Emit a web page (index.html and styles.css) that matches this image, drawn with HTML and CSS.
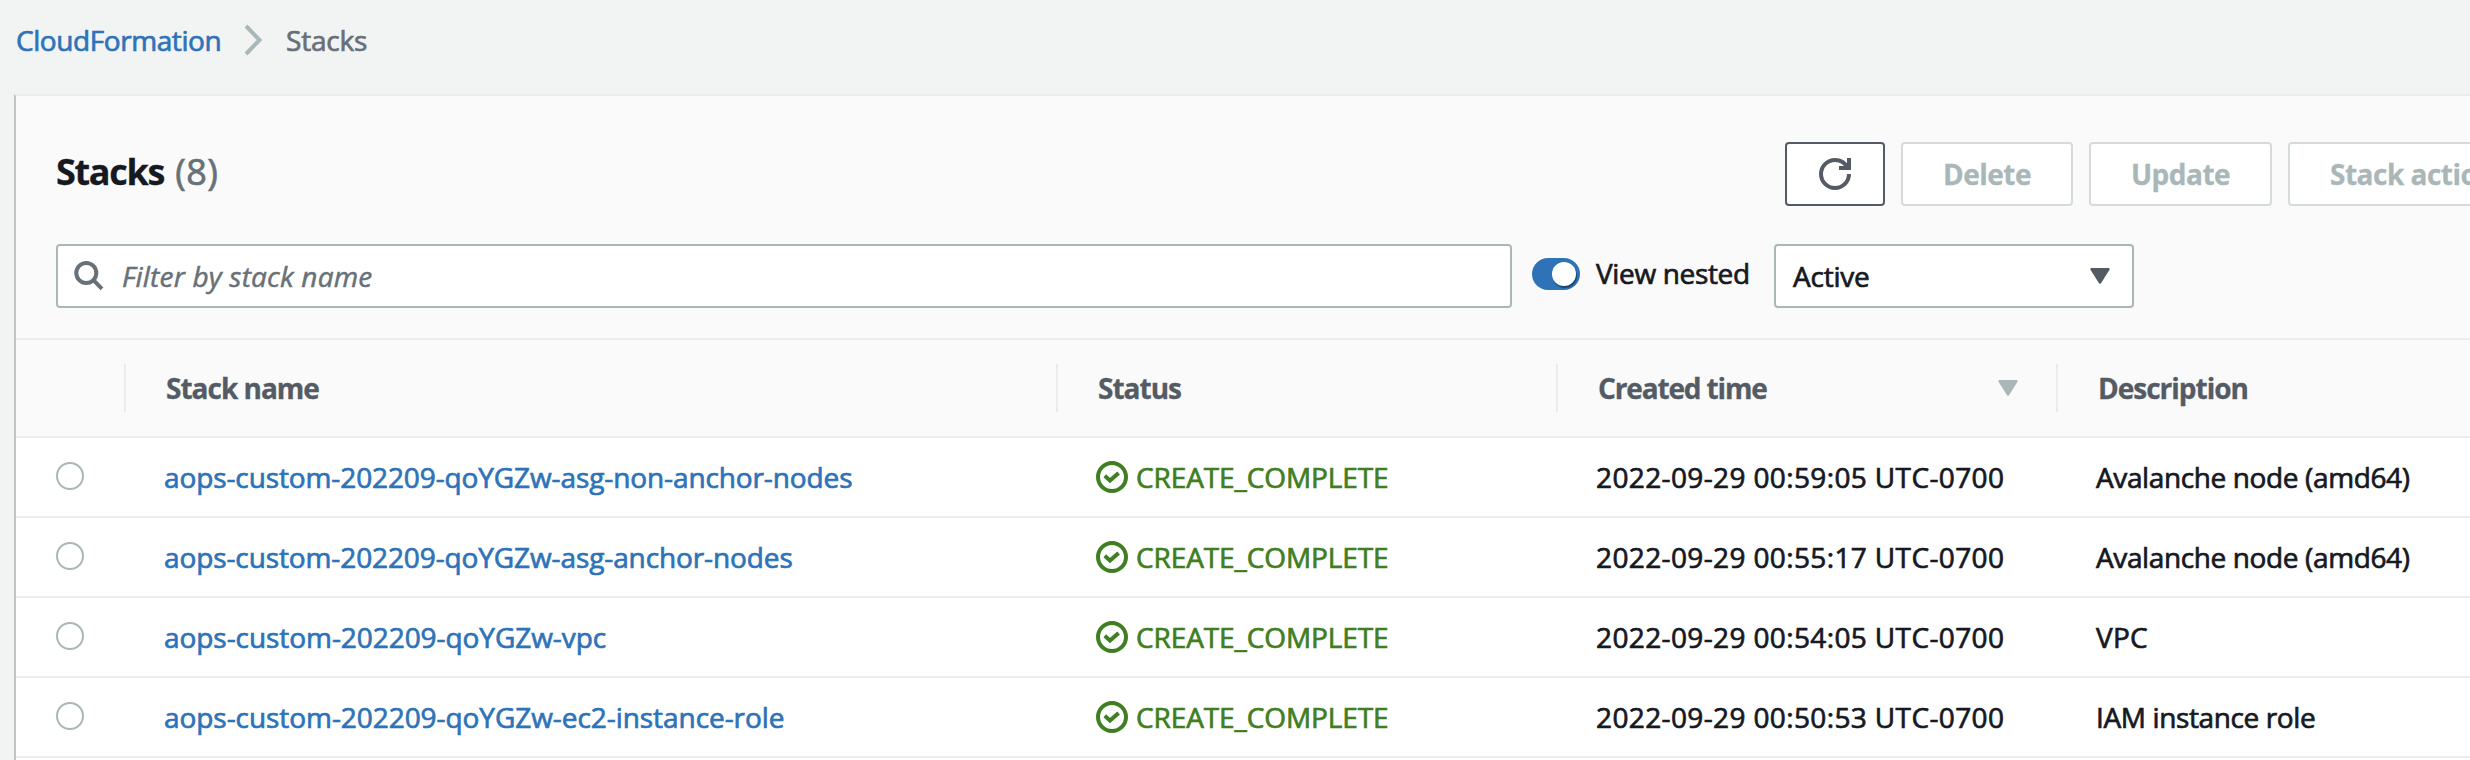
FILE: index.html
```html
<!DOCTYPE html>
<html lang="en">
<head>
<meta charset="utf-8">
<title>CloudFormation - Stacks</title>
<link rel="stylesheet" href="styles.css">
</head>
<body>
<svg class="defs" aria-hidden="true">
  <symbol id="ok" viewBox="0 0 16 16"><circle cx="8" cy="8" r="7" fill="none" stroke="currentColor" stroke-width="2"/><path d="M4.4 7.4 7 9.8 11.3 6" fill="none" stroke="currentColor" stroke-width="2"/></symbol>
  <symbol id="caret" viewBox="0 0 20 16"><path d="M1.5 1.2h17L10 14.6z" fill="currentColor" stroke="currentColor" stroke-width="2.4" stroke-linejoin="round"/></symbol>
</svg>
<nav class="breadcrumb">
  <a class="crumb-link" href="#">CloudFormation</a>
  <svg class="chevron" viewBox="0 0 20 32"><path d="M2 2 15.5 16 2 30" fill="none" stroke="currentColor" stroke-width="4"/></svg>
  <span class="crumb-current">Stacks</span>
</nav>
<main class="panel">
  <header class="panel-head">
    <div class="title-row">
      <h1 class="title"><span class="title-name">Stacks</span><span class="count">(8)</span></h1>
      <div class="actions">
        <button class="btn btn-refresh" aria-label="Refresh"><svg class="refresh" viewBox="0 0 16 16"><path d="M15 8c0 3.87-3.13 7-7 7s-7-3.13-7-7 3.13-7 7-7c2.79 0 5.2 1.63 6.33 4M15 0v5h-5" fill="none" stroke="currentColor" stroke-width="2"/></svg></button>
        <button class="btn btn-delete" disabled>Delete</button>
        <button class="btn btn-update" disabled>Update</button>
        <button class="btn btn-stack" disabled>Stack actions</button>
      </div>
    </div>
    <div class="filter-row">
      <div class="search">
        <svg class="search-icon" viewBox="0 0 30 30"><circle cx="12.3" cy="12" r="10" fill="none" stroke="currentColor" stroke-width="4"/><path d="M19 18.7 28 27.8" fill="none" stroke="currentColor" stroke-width="4"/></svg>
        <span class="placeholder">Filter by stack name</span>
      </div>
      <span class="toggle"><span class="knob"></span></span>
      <span class="toggle-label">View nested</span>
      <div class="select"><span>Active</span><svg class="caret"><use href="#caret"/></svg></div>
    </div>
  </header>
  <section class="table">
    <div class="row head">
      <div class="cell"></div>
      <div class="cell h-name">Stack name</div>
      <div class="cell h-status">Status</div>
      <div class="cell h-time"><span>Created time</span><svg class="sort"><use href="#caret"/></svg></div>
      <div class="cell h-desc">Description</div>
    </div>
    <div class="row">
      <div class="cell pick"><span class="radio"></span></div>
      <div class="cell"><a class="name" href="#">aops-custom-202209-qoYGZw-asg-non-anchor-nodes</a></div>
      <div class="cell status"><svg class="ok"><use href="#ok"/></svg>CREATE_COMPLETE</div>
      <div class="cell time">2022-09-29 00:59:05 UTC-0700</div>
      <div class="cell desc">Avalanche node (amd64)</div>
    </div>
    <div class="row">
      <div class="cell pick"><span class="radio"></span></div>
      <div class="cell"><a class="name" href="#">aops-custom-202209-qoYGZw-asg-anchor-nodes</a></div>
      <div class="cell status"><svg class="ok"><use href="#ok"/></svg>CREATE_COMPLETE</div>
      <div class="cell time">2022-09-29 00:55:17 UTC-0700</div>
      <div class="cell desc">Avalanche node (amd64)</div>
    </div>
    <div class="row">
      <div class="cell pick"><span class="radio"></span></div>
      <div class="cell"><a class="name name-short" href="#">aops-custom-202209-qoYGZw-vpc</a></div>
      <div class="cell status"><svg class="ok"><use href="#ok"/></svg>CREATE_COMPLETE</div>
      <div class="cell time">2022-09-29 00:54:05 UTC-0700</div>
      <div class="cell desc desc-short">VPC</div>
    </div>
    <div class="row">
      <div class="cell pick"><span class="radio"></span></div>
      <div class="cell"><a class="name name-short" href="#">aops-custom-202209-qoYGZw-ec2-instance-role</a></div>
      <div class="cell status"><svg class="ok"><use href="#ok"/></svg>CREATE_COMPLETE</div>
      <div class="cell time">2022-09-29 00:50:53 UTC-0700</div>
      <div class="cell desc">IAM instance role</div>
    </div>
  </section>
</main>
</body>
</html>
```
FILE: styles.css
```css
* { box-sizing: border-box; }
body {
  margin: 0;
  height: 760px;
  overflow: hidden;
  display: flex;
  flex-direction: column;
  background: #f2f3f3;
  color: #16191f;
  font: 400 28px/36px "Open Sans", "Noto Sans", sans-serif;
  -webkit-text-stroke: 0.7px currentColor;
  white-space: nowrap;
}
a { text-decoration: none; color: #2e73b8; }
.defs { width: 0; height: 0; position: absolute; }
svg { flex: none; }

.breadcrumb { display: flex; align-items: center; height: 94px; flex: none; padding: 0 0 15px 16px; }
.crumb-link { width: 205px; letter-spacing: -0.42px; }
.chevron { width: 20px; height: 32px; margin: 1px 22px 0 23px; color: #aab7b8; }
.crumb-current { color: #687078; letter-spacing: -0.2px; }

.panel {
  flex: 1;
  margin-left: 14px;
  border-top: 2px solid #eaeded;
  border-left: 2px solid #bfc5c7;
  background: #fff;
  overflow: hidden;
}
.panel-head { height: 244px; background: #fafafa; border-bottom: 2px solid #eaeded; padding: 46px 0 0 40px; }
.title-row { display: flex; justify-content: space-between; height: 64px; }
.title { margin: 6px 0 0 0; display: flex; gap: 11px; font-size: 36px; line-height: 48px; font-weight: 400; }
.title-name { font-weight: 700; letter-spacing: -1.3px; -webkit-text-stroke: 0.3px currentColor; }
.count { color: #687078; letter-spacing: 0.4px; }
.actions { display: flex; gap: 16px; width: 685px; flex: none; }
.btn {
  flex: none;
  height: 64px;
  padding: 0;
  background: #fff;
  border: 2px solid #d5dbdb;
  border-radius: 4px;
  color: #aab7b8;
  font: 700 28px/36px "Open Sans", "Noto Sans", sans-serif;
  letter-spacing: -0.5px;
  -webkit-text-stroke: 0.3px currentColor;
  white-space: nowrap;
}
.btn-refresh { width: 100px; border-color: #545b64; color: #545b64; display: flex; align-items: center; justify-content: center; }
.refresh { width: 32px; height: 32px; }
.btn-delete { width: 172px; }
.btn-update { width: 183px; }
.btn-stack { width: 290px; padding-left: 40px; text-align: left; }

.filter-row { display: flex; align-items: center; height: 64px; margin-top: 38px; }
.search { width: 1456px; height: 64px; flex: none; display: flex; align-items: center; background: #fff; border: 2px solid #aab7b8; border-radius: 4px; padding-left: 16px; }
.search-icon { width: 30px; height: 30px; color: #687078; }
.placeholder { margin-left: 18px; color: #687078; font-style: italic; letter-spacing: 0.2px; -webkit-text-stroke-width: 0.5px; }
.toggle { width: 48px; height: 32px; margin: -4px 0 0 20px; border-radius: 16px; background: #2e73b8; display: flex; justify-content: flex-end; align-items: center; padding-right: 4px; }
.knob { width: 24px; height: 24px; border-radius: 50%; background: #fff; box-shadow: 1px 2px 1px rgba(0, 0, 0, 0.4); }
.toggle-label { width: 178px; margin: -6px 0 0 16px; letter-spacing: -0.34px; }
.select { width: 360px; height: 64px; display: flex; align-items: center; justify-content: space-between; padding: 0 22px 0 17px; border: 2px solid #aab7b8; border-radius: 4px; background: #fff; letter-spacing: -0.23px; }
.caret { width: 20px; height: 16px; color: #545b64; }

.row { display: grid; grid-template-columns: 108px 932px 500px 500px 414px; height: 80px; border-bottom: 2px solid #eaeded; }
.cell { display: flex; align-items: center; padding-left: 40px; }
.head { height: 98px; background: #fafafa; color: #545b64; font-weight: 700; letter-spacing: -1px; -webkit-text-stroke: 0.3px currentColor; }
.head .cell { height: 48px; margin-top: 24px; border-right: 2px solid #eaeded; margin-right: -2px; padding-left: 42px; }
.head .h-desc { border-right: 0; }
.head .h-time { justify-content: space-between; padding-right: 38px; letter-spacing: -1.15px; }
.sort { width: 20px; height: 16px; color: #aab7b8; }
.radio { width: 28px; height: 28px; margin-top: -2px; border: 2px solid #aab7b8; border-radius: 50%; background: #fff; }
.name { letter-spacing: -0.11px; }
.name-short { letter-spacing: -0.06px; }
.status { color: #3f7f22; letter-spacing: -0.1px; }
.ok { width: 32px; height: 32px; margin-right: 8px; }
.time { letter-spacing: 0.37px; }
.desc { letter-spacing: -0.38px; }
.desc-short { letter-spacing: 0.2px; }
```
